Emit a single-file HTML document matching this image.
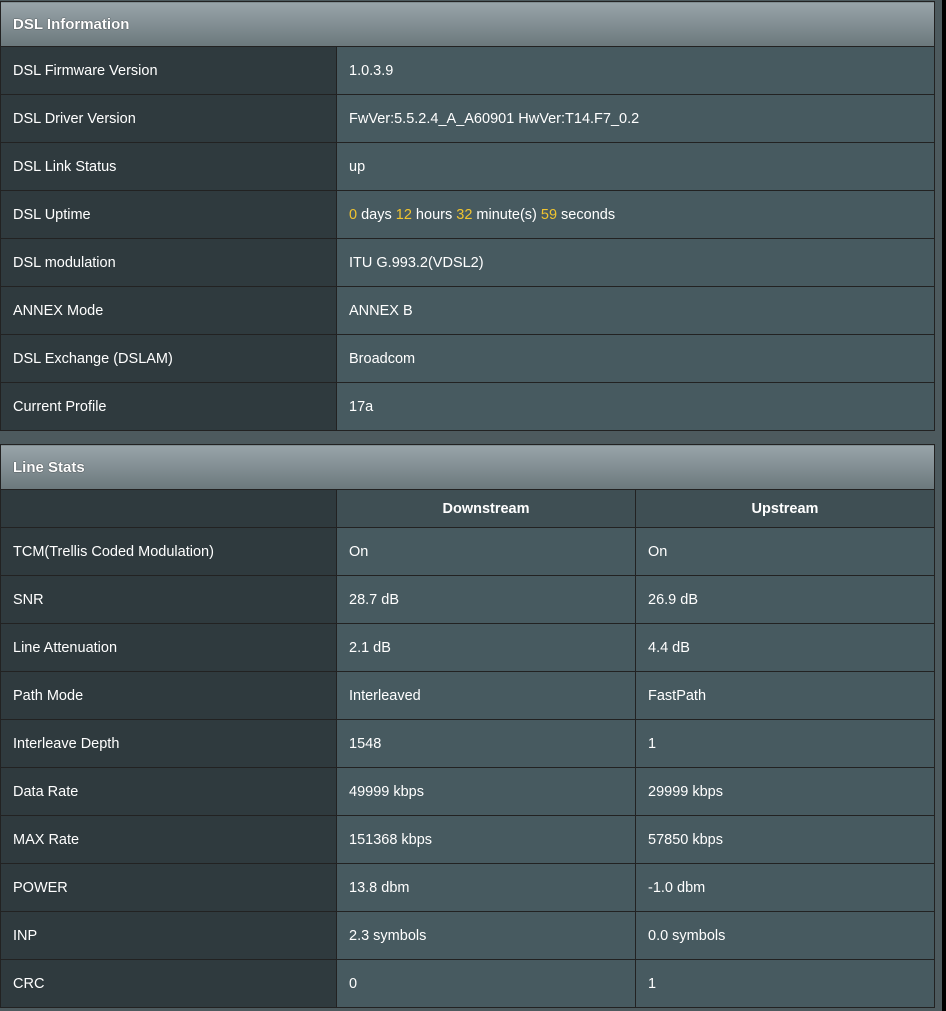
<!DOCTYPE html>
<html><head><style>
body{margin:0;width:946px;height:1011px;background:#4d5a5e;font-family:"Liberation Sans",Arial,sans-serif;font-size:14.5px;color:#fff;position:relative;overflow:hidden}
.blk{position:absolute;right:0;top:0;width:4px;height:1011px;background:#000}
table{position:absolute;left:0;width:935px;border-collapse:collapse;table-layout:fixed}
td,th{border:1px solid #222;height:48px;padding:0 0 0 12px;text-align:left;font-weight:normal;vertical-align:middle;box-sizing:border-box}
td.l{background:#2f3a3e}
td.v{background:#475a60}
th.h{height:45px;background:linear-gradient(#98a4a9,#6b787c);font-weight:bold;font-size:15px;color:#fff;text-shadow:0 0 1px #000}
tr.ch td{height:38px;background:#3f4f54;text-align:center;font-weight:bold;padding:0}
tr.ch td.l{background:#2f3a3e}
.y{color:#f0c430}
</style></head><body>
<div class="blk"></div>
<table style="top:1px">
<colgroup><col style="width:336px"><col></colgroup>
<tr><th class="h" colspan="2">DSL Information</th></tr>
<tr><td class="l">DSL Firmware Version</td><td class="v">1.0.3.9</td></tr>
<tr><td class="l">DSL Driver Version</td><td class="v">FwVer:5.5.2.4_A_A60901 HwVer:T14.F7_0.2</td></tr>
<tr><td class="l">DSL Link Status</td><td class="v">up</td></tr>
<tr><td class="l">DSL Uptime</td><td class="v"><span class="y">0</span> days <span class="y">12</span> hours <span class="y">32</span> minute(s) <span class="y">59</span> seconds</td></tr>
<tr><td class="l">DSL modulation</td><td class="v">ITU G.993.2(VDSL2)</td></tr>
<tr><td class="l">ANNEX Mode</td><td class="v">ANNEX B</td></tr>
<tr><td class="l">DSL Exchange (DSLAM)</td><td class="v">Broadcom</td></tr>
<tr><td class="l">Current Profile</td><td class="v">17a</td></tr>
</table>
<table style="top:444px">
<colgroup><col style="width:336px"><col style="width:299px"><col></colgroup>
<tr><th class="h" colspan="3">Line Stats</th></tr>
<tr class="ch"><td class="l"></td><td>Downstream</td><td>Upstream</td></tr>
<tr><td class="l">TCM(Trellis Coded Modulation)</td><td class="v">On</td><td class="v">On</td></tr>
<tr><td class="l">SNR</td><td class="v">28.7 dB</td><td class="v">26.9 dB</td></tr>
<tr><td class="l">Line Attenuation</td><td class="v">2.1 dB</td><td class="v">4.4 dB</td></tr>
<tr><td class="l">Path Mode</td><td class="v">Interleaved</td><td class="v">FastPath</td></tr>
<tr><td class="l">Interleave Depth</td><td class="v">1548</td><td class="v">1</td></tr>
<tr><td class="l">Data Rate</td><td class="v">49999 kbps</td><td class="v">29999 kbps</td></tr>
<tr><td class="l">MAX Rate</td><td class="v">151368 kbps</td><td class="v">57850 kbps</td></tr>
<tr><td class="l">POWER</td><td class="v">13.8 dbm</td><td class="v">-1.0 dbm</td></tr>
<tr><td class="l">INP</td><td class="v">2.3 symbols</td><td class="v">0.0 symbols</td></tr>
<tr><td class="l">CRC</td><td class="v">0</td><td class="v">1</td></tr>
</table>
</body></html>
